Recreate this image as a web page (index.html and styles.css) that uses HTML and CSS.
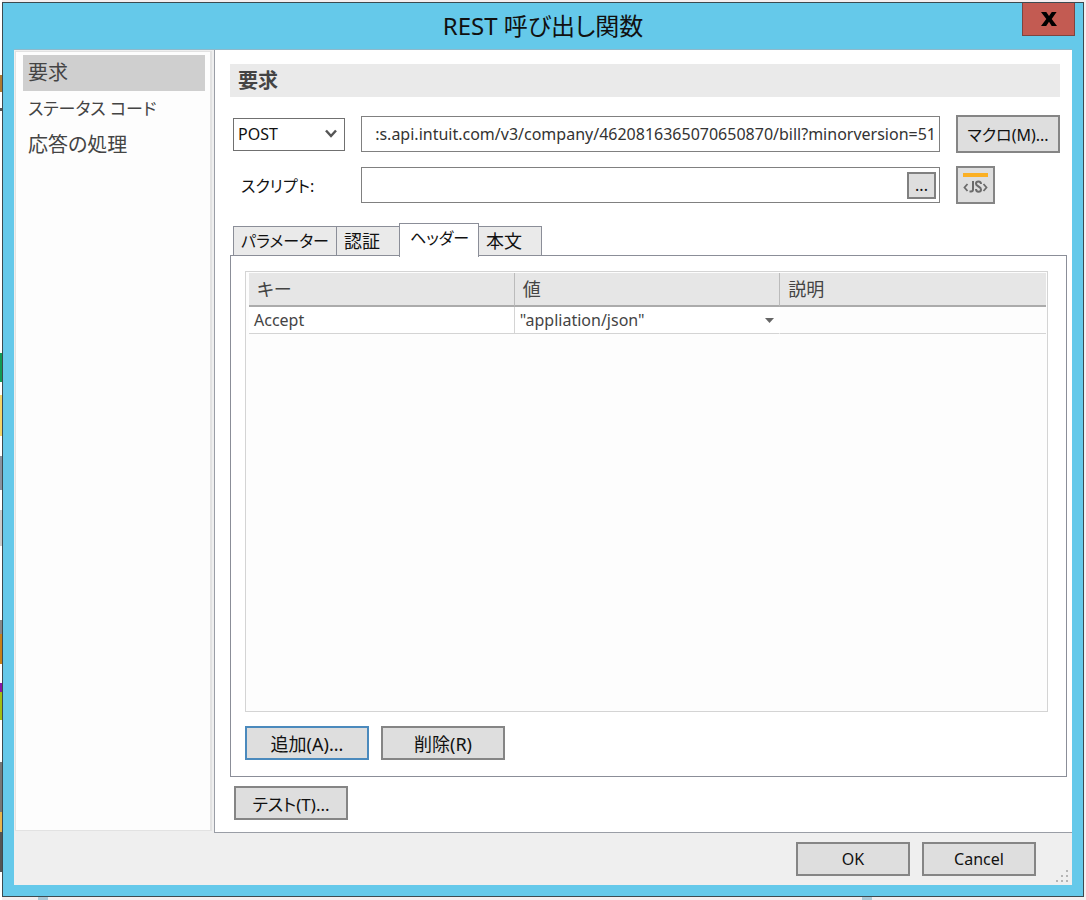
FILE: index.html
```html
<!DOCTYPE html>
<html lang="ja">
<head>
<meta charset="utf-8">
<meta name="viewport" content="width=device-width, initial-scale=1">
<title>REST 呼び出し関数</title>
<link rel="stylesheet" href="styles.css">
</head>
<body>
<div class="desktop">
  <main class="dialog">
    <header class="titlebar">
      <h1 class="title">REST 呼び出し関数</h1>
      <button class="close" type="button" aria-label="閉じる">
        <svg width="16" height="14" viewBox="0 0 16 14" aria-hidden="true"><path d="M0 0h5.300L8 4.100 10.800 0h4.800L10.700 6.900 16 14h-5.300L8 9.700 5.200 14H0l5.300-7.100z" fill="#000"/></svg>
      </button>
    </header>
    <div class="client">
      <div class="columns">
        <nav class="sidebar">
          <a class="side-item selected" href="#request">要求</a>
          <a class="side-item kana" href="#status">ステータス コード</a>
          <a class="side-item" href="#response">応答の処理</a>
        </nav>
        <section class="pane" id="request">
          <h2 class="heading">要求</h2>
          <form class="fields">
            <select class="method" aria-label="メソッド"><option>POST</option></select>
            <input class="box url" type="text" aria-label="URL" value=":s.api.intuit.com/v3/company/4620816365070650870/bill?minorversion=51">
            <button class="btn macro" type="button">マクロ(M)...</button>
            <label class="script-label" for="script">スクリプト:</label>
            <div class="box script">
              <input class="script-input" id="script" type="text">
              <button class="more" type="button">...</button>
            </div>
            <button class="btn js" type="button" aria-label="JS">
              <svg width="27" height="26" viewBox="0 0 27 26" aria-hidden="true">
                <rect x="1" y="1" width="25" height="4" fill="#fbb024"/>
                <g fill="none" stroke="#6b6b6b" stroke-width="2">
                  <path d="M5.500 12 2.500 15.500l3 3.500M21.500 12l3 3.500-3 3.500" stroke-width="1.800"/>
                  <path d="M11 9v8.500q0 2-2 2H7.500"/>
                  <path d="M19 12q0-2.500-2.500-2.500T14 11.800q0 1.400 2.500 2.700t2.500 2.900q0 2.300-2.500 2.300T14 17"/>
                </g>
              </svg>
            </button>
          </form>
          <div class="tabs" role="tablist">
            <button class="tab tab-wide" role="tab" type="button">パラメーター</button>
            <button class="tab" role="tab" type="button">認証</button>
            <button class="tab active" role="tab" type="button" aria-selected="true">ヘッダー</button>
            <button class="tab" role="tab" type="button">本文</button>
          </div>
          <div class="panel" role="tabpanel">
            <div class="grid">
              <table class="table">
                <thead><tr><th>キー</th><th>値</th><th>説明</th></tr></thead>
                <tbody><tr>
                  <td>Accept</td>
                  <td><div class="value">"appliation/json"<svg width="9" height="5" viewBox="0 0 9 5" aria-hidden="true"><path d="M0 0h9L4.500 5z" fill="#666"/></svg></div></td>
                  <td></td>
                </tr></tbody>
              </table>
            </div>
            <div class="actions">
              <button class="btn focus" type="button">追加(A)...</button>
              <button class="btn" type="button">削除(R)</button>
            </div>
          </div>
          <button class="btn test" type="button">テスト(T)...</button>
        </section>
      </div>
      <footer class="footer">
        <button class="btn" type="button">OK</button>
        <button class="btn" type="button">Cancel</button>
        <svg class="grip" width="12" height="12" viewBox="0 0 12 12" aria-hidden="true"><path d="M10 0h2v2h-2zM10 5h2v2h-2zM10 10h2v2h-2zM5 5h2v2H5zM5 10h2v2H5zM0 10h2v2H0z" fill="#b5b5b5"/></svg>
      </footer>
    </div>
  </main>
</div>
</body>
</html>
```
FILE: styles.css
```css
* { box-sizing: border-box; }

body {
  margin: 0;
  font-family: "Noto Sans", "Noto Sans CJK JP", sans-serif;
  font-size: 16px;
  color: #111;
}

button, input, select {
  font: inherit;
  color: inherit;
  margin: 0;
}

.desktop {
  display: flex;
  min-height: 100vh;
  padding: 2px 2px 3px;
  background:
    linear-gradient(#a9c8d6, #a9c8d6) 38px 100% / 10px 3px no-repeat,
    linear-gradient(#a9c8d6, #a9c8d6) 862px 100% / 10px 3px no-repeat,
    linear-gradient(#fff 0 75px, #b07a30 75px 92px, #fff 92px 108px, #555 108px 111px, #fff 111px 353px,
      #129a55 353px 382px, #fff 382px 395px, #f3d46a 395px 436px, #fff 436px 456px, #8a93a0 456px 490px,
      #fff 490px 510px, #ccc 510px 546px, #fff 546px 620px, #888 620px 634px, #c98019 634px 664px,
      #fff 664px 683px, #8a14a8 683px 692px, #a3bd13 692px 720px, #fff 720px 762px, #777 762px 812px,
      #e8b44c 812px 832px, #555 832px 872px, #fff 872px) 0 0 / 2px 100% no-repeat,
    #f4eeef;
}

.dialog {
  flex: 1;
  display: flex;
  flex-direction: column;
  min-width: 0;
  padding: 0 11px 11px;
  border: 1px solid #3c4a50;
  background: #65c9ea;
}

.titlebar {
  position: relative;
  display: flex;
  align-items: center;
  justify-content: center;
  height: 46px;
}

.title {
  margin: 0;
  font-size: 24px;
  line-height: 32px;
  font-weight: 400;
  font-feature-settings: "palt";
}

.close {
  position: absolute;
  top: 0;
  right: -3px;
  display: flex;
  align-items: center;
  justify-content: center;
  width: 53px;
  height: 33px;
  padding: 0;
  border: 1px solid #7d4540;
  border-top: 0;
  background: #c35b52;
}

.client {
  flex: 1;
  display: flex;
  flex-direction: column;
  border-top: 1px solid #8fb9cb;
  background: #efefef;
}

.columns {
  flex: 1;
  display: flex;
}

.sidebar {
  flex: none;
  width: 197px;
  margin: 1px 2px 2px 1px;
  padding: 3px 5px 0 7px;
  border: 2px solid #e2e2e2;
  border-width: 1px 2px 1px 1px;
  background: #fdfdfd;
}

.side-item {
  display: block;
  padding: 0 5px;
  font-size: 20px;
  line-height: 36px;
  color: #444;
  text-decoration: none;
  font-feature-settings: "palt";
}

.kana { font-size: 17px; }

.selected { background: #cfcfcf; }

.pane {
  flex: 1;
  display: flex;
  flex-direction: column;
  min-width: 0;
  padding: 14px 5px 12px 15px;
  border: 1px solid #9a9ea6;
  border-width: 0 0 1px 1px;
  background: #fff;
}

.heading {
  margin: 0 7px 0 0;
  padding: 0 8px;
  font-size: 20px;
  line-height: 33px;
  color: #444;
  background: #eaeaea;
}

.fields {
  display: grid;
  grid-template-columns: 112px 1fr 104px;
  gap: 13px 16px;
  align-items: center;
  margin: 18px 7px 0 3px;
}

.method {
  appearance: none;
  height: 33px;
  padding: 0 4px;
  border: 1px solid #707070;
  border-radius: 0;
  background: #fff url("data:image/svg+xml,%3Csvg xmlns='http://www.w3.org/2000/svg' width='12' height='10'%3E%3Cpath d='M1 1.500l5 5.500 5-5.500' fill='none' stroke='%23555' stroke-width='2.500'/%3E%3C/svg%3E") right 7px center no-repeat;
}

.box {
  width: 100%;
  height: 36px;
  border: 1px solid #808080;
  background: #fff;
}

.url {
  padding: 0 3px;
  text-align: right;
  color: #333;
}

.btn {
  min-width: 114px;
  height: 34px;
  padding: 0;
  border: 2px solid #858585;
  background: #dedede;
  font-feature-settings: "palt";
}

.macro {
  min-width: 0;
  height: 38px;
}

.script-label {
  padding-left: 8px;
  font-feature-settings: "palt";
}

.script {
  display: flex;
  align-items: center;
  padding: 0 3px;
}

.script-input {
  flex: 1;
  min-width: 0;
  border: 0;
  outline: 0;
  background: transparent;
}

.more {
  width: 29px;
  height: 27px;
  padding: 0;
  border: 2px solid #808080;
  background: #dedede;
  line-height: 20px;
}

.js {
  display: flex;
  align-items: center;
  justify-content: center;
  min-width: 0;
  width: 39px;
  height: 38px;
}

.tabs {
  display: flex;
  align-items: flex-end;
  margin: 19px 0 -2px 3px;
}

.tab {
  width: 63px;
  height: 29px;
  margin-bottom: 2px;
  padding: 0 10px 0 7px;
  border: 1px solid #8b8e98;
  border-left-width: 0;
  border-bottom: 0;
  background: #eaeaea;
  font-size: 18px;
  line-height: 26px;
  text-align: left;
  white-space: nowrap;
  font-feature-settings: "palt";
}

.tab-wide {
  width: 104px;
  border-left-width: 1px;
  font-size: 16px;
}

.active {
  position: relative;
  width: 80px;
  height: 34px;
  margin: 0 0 0 -1px;
  padding: 0 0 5px 10px;
  border-left-width: 1px;
  background: #fff;
  font-size: 16px;
}

.panel {
  flex: 1;
  display: flex;
  flex-direction: column;
  padding: 15px 18px 16px 14px;
  border: 1px solid #8b8e98;
}

.grid {
  flex: 1;
  padding: 1px 1px 0 3px;
  border: 1px solid #d4d4d4;
  background: #fdfdfd;
}

.table {
  width: 100%;
  table-layout: fixed;
  border-collapse: separate;
  border-spacing: 0;
  color: #444;
}

.table th {
  height: 34px;
  padding: 0 8px;
  border-bottom: 2px solid #ababab;
  border-right: 1px solid #bbb;
  background: #e6e6e6;
  font-size: 18px;
  line-height: 26px;
  font-weight: 400;
  text-align: left;
  font-feature-settings: "palt";
}

.table td {
  height: 27px;
  padding: 0 5px;
  border-bottom: 1px solid #d4d4d4;
  border-right: 1px solid #d4d4d4;
  background: #fff;
  line-height: 24px;
}

.table th:last-child, .table td:last-child { border-right: 0; }
.table td:last-child { background: #fdfdfd; }
.table td:nth-child(2) { border-right-color: #fff; }

.value {
  display: flex;
  align-items: center;
  justify-content: space-between;
}

.actions {
  display: flex;
  gap: 12px;
  margin-top: 14px;
}

.actions .btn {
  width: 124px;
  font-size: 18px;
}

.actions .focus { border-color: #4b8abd; }

.test {
  align-self: flex-start;
  margin: 9px 0 0 4px;
  font-size: 17px;
}

.footer {
  position: relative;
  display: flex;
  justify-content: flex-end;
  gap: 12px;
  padding: 9px 36px 9px 0;
}

.grip {
  position: absolute;
  right: 4px;
  bottom: 3px;
}
```
